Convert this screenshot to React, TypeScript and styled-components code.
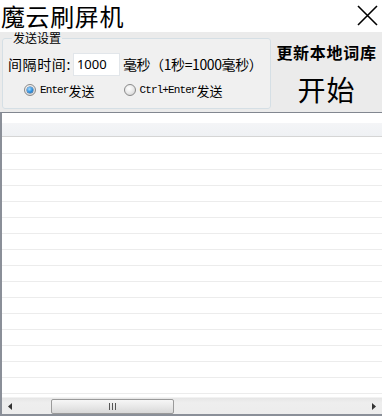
import React from "react";
import styled, { createGlobalStyle } from "styled-components";

const Global = createGlobalStyle`
  html, body { margin: 0; padding: 0; background: #ffffff; }
  body { width: 382px; height: 416px; overflow: hidden; font-family: "Noto Sans CJK SC", "Noto Sans", sans-serif; color: #000; }
  * { box-sizing: border-box; }
`;

const Window = styled.div`
  width: 382px;
  height: 416px;
  display: flex;
  flex-direction: column;
  background: #fff;
`;

const TitleBar = styled.div`
  height: 32px;
  display: flex;
  align-items: center;
  justify-content: space-between;
  padding: 0 4px 0 1px;
  background: #fff;
`;

const Title = styled.div`
  font-size: 24px;
  line-height: 28px;
  letter-spacing: 0.6px;
  font-family: "Noto Sans CJK SC", sans-serif;
  white-space: nowrap;
`;

const CloseButton = styled.button`
  width: 22px;
  height: 22px;
  padding: 0;
  border: none;
  background: transparent;
  display: flex;
  align-items: center;
  justify-content: center;
  margin-top: -2px;
`;

const Panel = styled.div`
  height: 80px;
  display: flex;
  background: #ebebeb;
  padding-bottom: 3px;
`;

const GroupBox = styled.fieldset`
  margin: 0 0 0 2px;
  width: 269px;
  height: 77px;
  border: 1px solid #d5dfe5;
  border-radius: 3px;
  background: #f0f0f0;
  padding: 8px 0 0 5px;
  min-width: 0;
`;

const Legend = styled.legend`
  font-size: 12px;
  line-height: 12px;
  padding: 0 1px;
  margin-left: 4px;
  color: #000;
`;

const FieldRow = styled.div`
  display: flex;
  align-items: center;
  height: 24px;
`;

const Label = styled.span`
  font-size: 14px;
  line-height: 14px;
  letter-spacing: 0.6px;
`;

const Input = styled.input`
  width: 47px;
  height: 23px;
  margin-left: 2px;
  border: 1px solid #e2e6ea;
  background: #fff;
  font-family: "Noto Sans", sans-serif;
  font-size: 13px;
  padding: 0 0 0 3px;
  outline: none;
  color: #000;
`;

const Unit = styled.span`
  font-size: 14px;
  line-height: 14px;
  margin-left: 3px;
  letter-spacing: -0.4px;
  white-space: nowrap;
`;

const RadioRow = styled.div`
  display: flex;
  align-items: center;
  height: 16px;
  margin-top: 6px;
  padding-left: 16px;
`;

const RadioLabel = styled.label<{ $gap: number }>`
  display: flex;
  align-items: center;
  margin-right: ${(p) => p.$gap}px;
  white-space: nowrap;
`;

const RadioDot = styled.span<{ $checked: boolean }>`
  width: 12px;
  height: 12px;
  border-radius: 50%;
  border: 1px solid #8a8a8a;
  background: radial-gradient(circle at 40% 35%, #ffffff 0%, #e6e6e6 55%, #c8c8c8 100%);
  display: flex;
  align-items: center;
  justify-content: center;
  margin-right: 4px;
  &::after {
    content: "";
    display: ${(p) => (p.$checked ? "block" : "none")};
    width: 6px;
    height: 6px;
    border-radius: 50%;
    background: radial-gradient(circle at 40% 35%, #a8dcff 0%, #2a8fe0 55%, #0d4f92 100%);
    box-shadow: 0 0 0 0.5px #2a5f94;
  }
`;

const Mono = styled.span`
  font-family: "Liberation Mono", "DejaVu Sans Mono", monospace;
  font-size: 11px;
  letter-spacing: -0.9px;
  line-height: 13px;
`;

const Cjk = styled.span`
  font-size: 13px;
  line-height: 13px;
`;

const RightColumn = styled.div`
  flex: 1;
  display: flex;
  flex-direction: column;
  align-items: center;
  padding-top: 12px;
`;

const UpdateButton = styled.button`
  border: none;
  background: transparent;
  padding: 0;
  font-family: "Noto Sans CJK SC", sans-serif;
  font-weight: 700;
  font-size: 16px;
  line-height: 16px;
  letter-spacing: 0.7px;
  color: #000;
  white-space: nowrap;
`;

const StartButton = styled.button`
  border: none;
  background: transparent;
  padding: 0;
  margin-top: 15px;
  font-family: "Noto Sans CJK SC", sans-serif;
  font-size: 28px;
  line-height: 28px;
  letter-spacing: 1px;
  color: #000;
`;

const ListView = styled.div`
  flex: 1;
  display: flex;
  flex-direction: column;
  border-top: 1px solid #828790;
  border-left: 2px solid #8a8f98;
  border-bottom: 2px solid #8a8f98;
  background: #fff;
  min-height: 0;
`;

const Header = styled.div`
  height: 24px;
  background: linear-gradient(#ffffff 0, #ffffff 10px, #f4f5f7 10px, #eff1f4 100%);
  border-bottom: 1px solid #d5d5d5;
`;

const Rows = styled.div`
  height: 260px;
  overflow: hidden;
  padding-top: 1px;
`;

const Row = styled.div`
  height: 16px;
  border-bottom: 1px solid #ececec;
`;

const HScroll = styled.div`
  height: 17px;
  display: flex;
  align-items: center;
  background: linear-gradient(#e6e6e6, #eeeeee 30%, #ececec);
  border-top: 1px solid #f2f2f2;
`;

const ArrowButton = styled.div`
  width: 17px;
  height: 16px;
  display: flex;
  align-items: center;
  justify-content: center;
`;

const Track = styled.div`
  flex: 1;
  height: 16px;
  display: flex;
  align-items: center;
  padding-left: 32px;
`;

const Thumb = styled.div`
  width: 123px;
  height: 15px;
  border: 1px solid #9a9a9a;
  border-radius: 2px;
  background: linear-gradient(#f6f6f6, #e8e8e8 50%, #d8d8d8);
  display: flex;
  align-items: center;
  justify-content: center;
  gap: 2px;
`;

const Grip = styled.span`
  width: 1px;
  height: 7px;
  background: #555;
`;

export default function App() {
  const rows = Array.from({ length: 17 });
  return (
    <Window>
      <Global />
      <TitleBar>
        <Title>魔云刷屏机</Title>
        <CloseButton aria-label="close">
          <svg width="21" height="21" viewBox="0 0 21 21">
            <path d="M1 1 L20 20 M20 1 L1 20" stroke="#000" strokeWidth="1.6" fill="none" />
          </svg>
        </CloseButton>
      </TitleBar>
      <Panel>
        <GroupBox>
          <Legend>发送设置</Legend>
          <FieldRow>
            <Label>间隔时间:</Label>
            <Input defaultValue="1000" />
            <Unit>毫秒（1秒=1000毫秒）</Unit>
          </FieldRow>
          <RadioRow>
            <RadioLabel $gap={29}>
              <RadioDot $checked />
              <Mono>Enter</Mono>
              <Cjk>发送</Cjk>
            </RadioLabel>
            <RadioLabel $gap={0}>
              <RadioDot $checked={false} />
              <Mono>Ctrl+Enter</Mono>
              <Cjk>发送</Cjk>
            </RadioLabel>
          </RadioRow>
        </GroupBox>
        <RightColumn>
          <UpdateButton>更新本地词库</UpdateButton>
          <StartButton>开始</StartButton>
        </RightColumn>
      </Panel>
      <ListView>
        <Header />
        <Rows>
          {rows.map((_, i) => (
            <Row key={i} />
          ))}
        </Rows>
        <HScroll>
          <ArrowButton>
            <svg width="5" height="7" viewBox="0 0 5 7">
              <path d="M4 0 L0 3.5 L4 7 Z" fill="#333" />
            </svg>
          </ArrowButton>
          <Track>
            <Thumb>
              <Grip />
              <Grip />
              <Grip />
            </Thumb>
          </Track>
          <ArrowButton>
            <svg width="5" height="7" viewBox="0 0 5 7">
              <path d="M1 0 L5 3.5 L1 7 Z" fill="#333" />
            </svg>
          </ArrowButton>
        </HScroll>
      </ListView>
    </Window>
  );
}
